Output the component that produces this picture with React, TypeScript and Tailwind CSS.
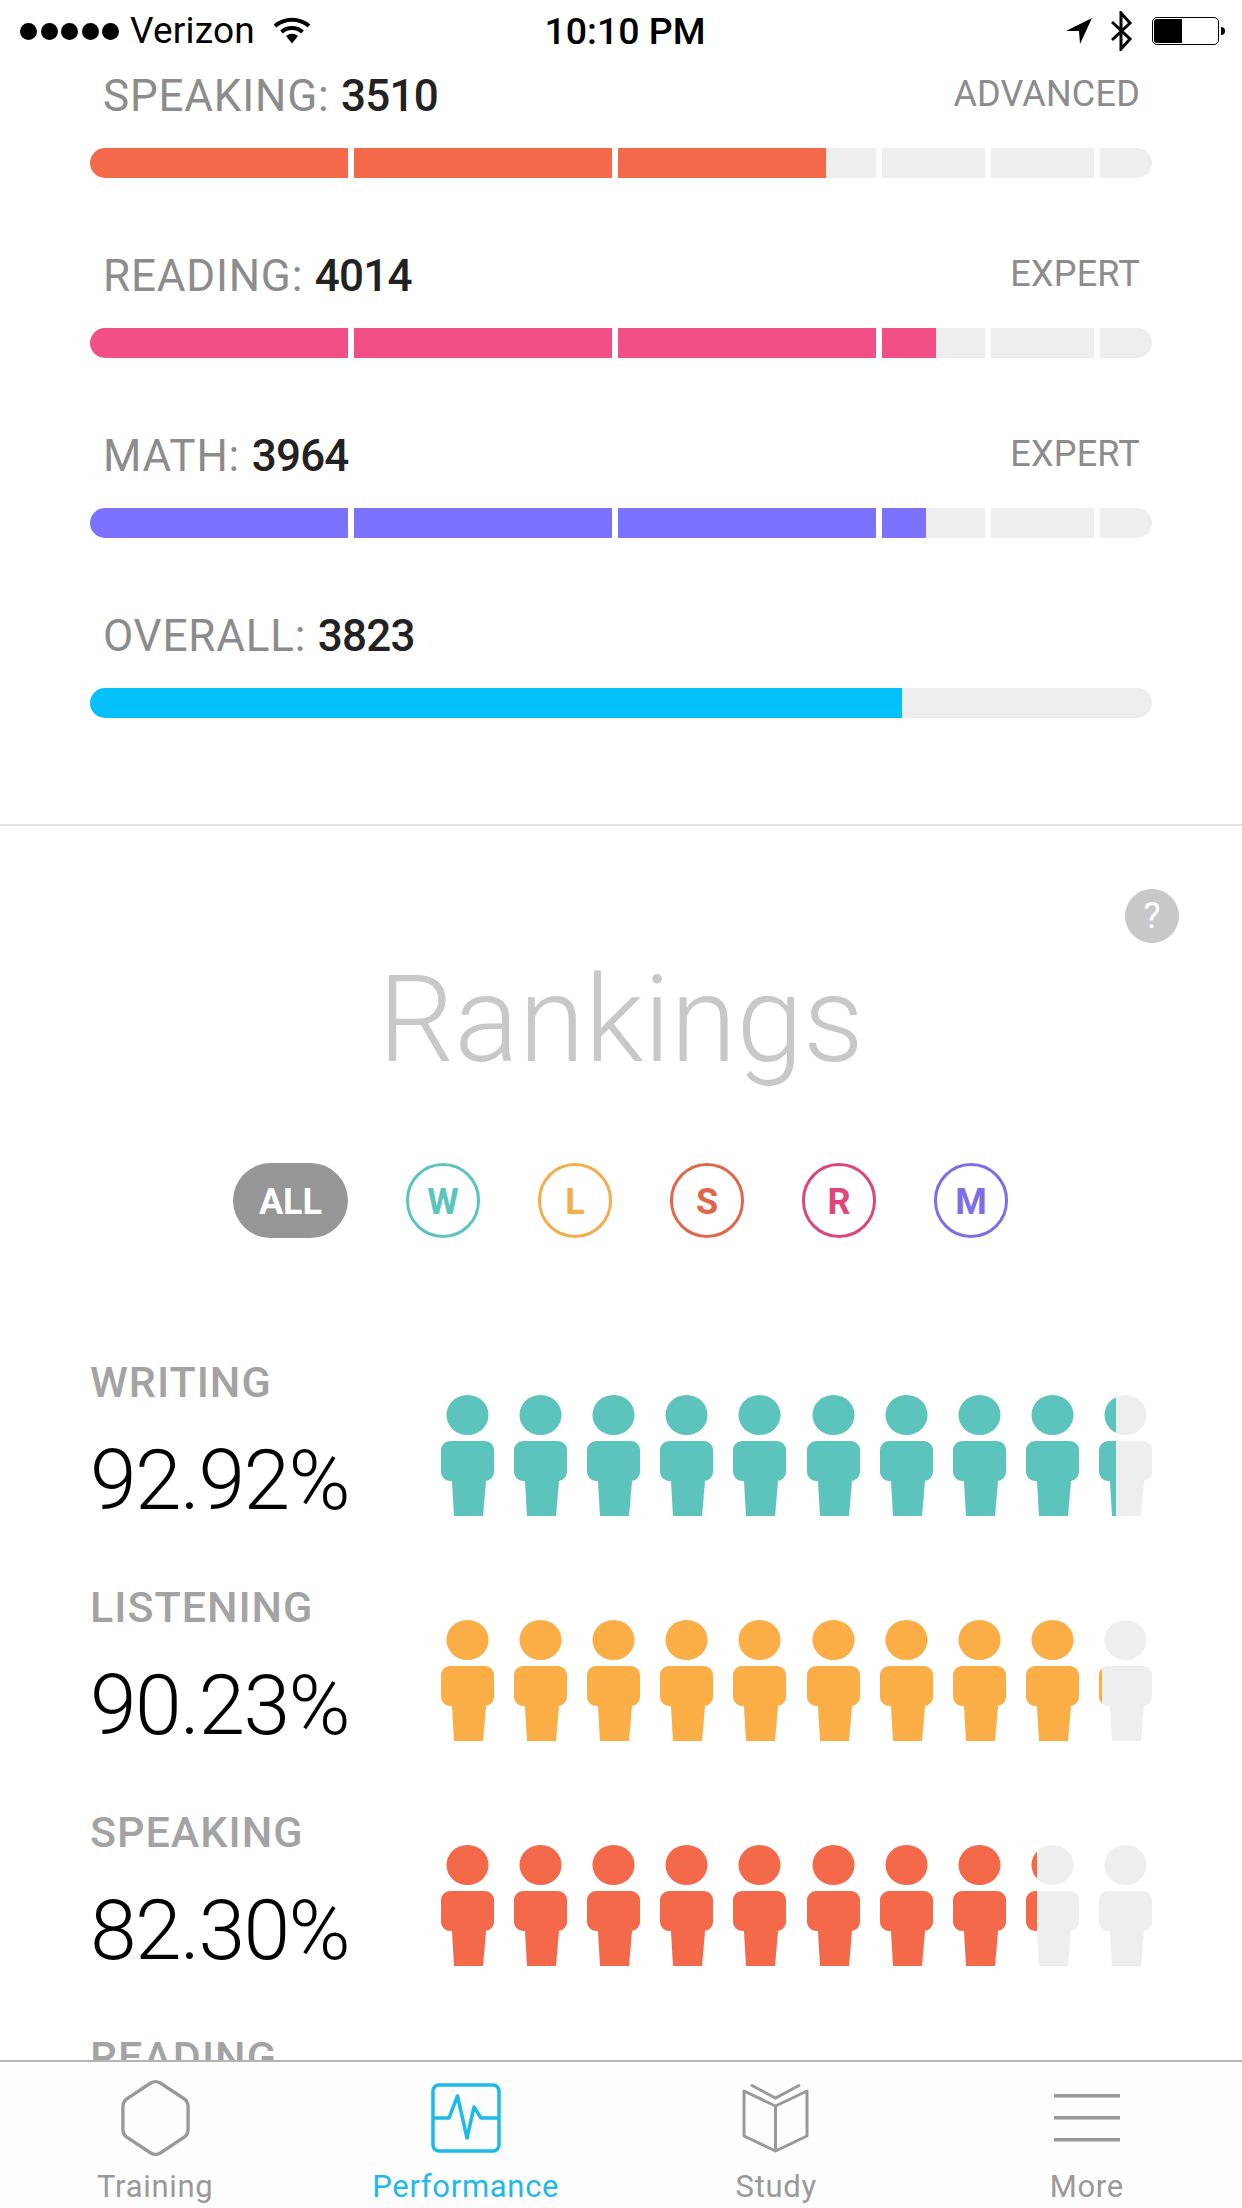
import { useId } from "react";

const TEAL = "#5cc4bd";
const ORANGE = "#fbae45";
const RED = "#f3694a";
const PINK = "#f14f85";
const PURPLE = "#7b72ff";
const BLUE = "#04c0fb";
const EMPTY = "#eeeeee";

// bar is split into level segments, widths in px
const SEGMENTS = [258, 258, 258, 103, 103, 52];

const SCORES = [
  { label: "SPEAKING:", score: "3510", level: "ADVANCED", color: RED, fill: 736 },
  { label: "READING:", score: "4014", level: "EXPERT", color: PINK, fill: 846 },
  { label: "MATH:", score: "3964", level: "EXPERT", color: PURPLE, fill: 836 },
];

const FILTERS = [
  { key: "W", cls: "border-[#5cc4bd] text-[#5cc4bd]" },
  { key: "L", cls: "border-[#f2ae4c] text-[#f2ae4c]" },
  { key: "S", cls: "border-[#e0674a] text-[#e0674a]" },
  { key: "R", cls: "border-[#dd4679] text-[#dd4679]" },
  { key: "M", cls: "border-[#7b6ee6] text-[#7b6ee6]" },
];

const RANKINGS = [
  { label: "WRITING", value: "92.92%", color: TEAL, filled: 657 + 17 },
  { label: "LISTENING", value: "90.23%", color: ORANGE, filled: 657 + 3 },
  { label: "SPEAKING", value: "82.30%", color: RED, filled: 584 + 11 },
  { label: "READING", value: "", color: PINK, filled: 0 },
];

function StatusBar() {
  return (
    <div className="grid h-[60px] shrink-0 grid-cols-[1fr_auto_1fr] items-center pt-[2px] font-['Roboto',sans-serif] text-black">
      <div className="flex items-center pl-[20px]">
        <div className="flex gap-[3.5px]">
          {[0, 1, 2, 3, 4].map((i) => (
            <span key={i} className="h-[17px] w-[17px] rounded-full bg-black" />
          ))}
        </div>
        <span className="ml-[11px] text-[37px] leading-[58px] tracking-[0.2px]">Verizon</span>
        <svg className="ml-[18px] -mt-[2px]" width="38" height="28" viewBox="0 0 38 28">
          <path d="M2 10 A26 26 0 0 1 36 10" fill="none" stroke="#000" strokeWidth="4" />
          <path d="M8.5 16 A16 16 0 0 1 29.5 16" fill="none" stroke="#000" strokeWidth="4" />
          <path d="M13 20 Q19 15.5 25 20 L19 27.5 Z" fill="#000" />
        </svg>
      </div>
      <span className="ml-[8px] text-[37.5px] font-medium leading-[58px]">10:10 PM</span>
      <div className="flex items-center justify-end pr-[17px]">
        <svg width="26" height="26" viewBox="0 0 26 26">
          <path d="M26 0 L0 13 L13 13 L14 26 Z" fill="#000" />
        </svg>
        <svg className="ml-[19px]" width="21" height="40" viewBox="0 0 21 40">
          <path d="M1 11 L19 28 L10 38 L10 2 L19 12 L1 29" fill="none" stroke="#000" strokeWidth="3" />
        </svg>
        <div className="ml-[20px] h-[28px] w-[67px] rounded-[5px] border border-black p-[1px]">
          <div className="h-full w-[28px] rounded-l-[3px] bg-black" />
        </div>
        <div className="ml-[2px] h-[8px] w-[4px] rounded-r-full bg-black" />
      </div>
    </div>
  );
}

function ScoreRow({ label, score, level, color, fill }: { label: string; score: string; level: string; color: string; fill: number }) {
  let start = 0;
  return (
    <div className="mb-[75px]">
      <div className="flex items-start justify-between pl-[13px] pr-[12px]">
        <p className="text-[44px] leading-[46px] tracking-[0.8px] text-[#8c8c8c]">
          {label} <span className="font-medium tracking-[-0.8px] text-[#222222]">{score}</span>
        </p>
        <span className="text-[36px] leading-[42px] tracking-[0.2px] text-[#8c8c8c]">{level}</span>
      </div>
      <div className="mt-[29px] flex h-[30px] gap-[6px] overflow-hidden rounded-full">
        {SEGMENTS.map((w, i) => {
          const filled = Math.max(0, Math.min(w, fill - start));
          start += w + 6;
          return (
            <div key={i} className="shrink-0 bg-[#eeeeee]" style={{ width: w }}>
              <div className="h-full" style={{ width: filled, background: color }} />
            </div>
          );
        })}
      </div>
    </div>
  );
}

function Person({ color, fill }: { color: string; fill: number }) {
  const id = useId();
  const shape = (
    <>
      <ellipse cx="26.5" cy="20" rx="21" ry="20" />
      <path d="M9 46 H44 A9 9 0 0 1 53 55 V77 A9 9 0 0 1 44 86 H45 L42 121 H13 L11 86 H9 A9 9 0 0 1 0 77 V55 A9 9 0 0 1 9 46 Z" />
    </>
  );
  return (
    <svg width="53" height="121" viewBox="0 0 53 121" className="shrink-0">
      <clipPath id={id}>
        <rect x="0" y="0" width={fill} height="121" />
      </clipPath>
      <g fill={EMPTY}>{shape}</g>
      <g fill={color} clipPath={`url(#${id})`}>
        {shape}
      </g>
    </svg>
  );
}

function RankingRow({ label, value, color, filled }: { label: string; value: string; color: string; filled: number }) {
  return (
    <div className="flex h-[225px] shrink-0">
      <div className="w-[351px] shrink-0">
        <p className="text-[43px] font-medium leading-[44px] tracking-[1px] text-[#a3a3a3]">{label}</p>
        <p className="mt-[35px] text-[84px] font-light leading-[84px] tracking-[-1.6px] text-black">{value}</p>
      </div>
      <div className="mt-[35px] flex w-[711px] justify-between">
        {Array.from({ length: 10 }).map((_, i) => (
          <Person key={i} color={color} fill={Math.max(0, Math.min(53, filled - i * 73))} />
        ))}
      </div>
    </div>
  );
}

function TabBar() {
  const tabs = [
    {
      label: "Training",
      active: false,
      icon: (
        <svg width="69" height="78" viewBox="0 0 72 80" fill="none" stroke="#999999" strokeWidth="3.5" strokeLinejoin="round">
          <path d="M31 3.5 Q36 0.5 41 3.5 L66 20 Q70 23 70 28 V52 Q70 57 66 60 L41 76.5 Q36 79.5 31 76.5 L6 60 Q2 57 2 52 V28 Q2 23 6 20 Z" />
        </svg>
      ),
    },
    {
      label: "Performance",
      active: true,
      icon: (
        <svg width="70" height="70" viewBox="0 0 70 70" fill="none" stroke="#1fb9e8" strokeWidth="3.5">
          <rect x="2" y="2" width="66" height="66" rx="6" />
          <path d="M3 35 H18 L26.5 13 L36 55 L43 24 L50 35 H67" strokeLinejoin="round" />
        </svg>
      ),
    },
    {
      label: "Study",
      active: false,
      icon: (
        <svg width="68" height="70" viewBox="0 0 68 70" fill="none" stroke="#999999" strokeWidth="3">
          <path d="M2 8 L33.5 23 L65 8 V53 L33.5 68 L2 53 Z M33.5 23 V68" strokeLinejoin="round" />
          <path d="M9 2 L33.5 15 L58 2" />
        </svg>
      ),
    },
    {
      label: "More",
      active: false,
      icon: (
        <svg width="66" height="48" viewBox="0 0 66 48" fill="#999999">
          <rect x="0" y="0" width="66" height="3.5" />
          <rect x="0" y="22" width="66" height="3.5" />
          <rect x="0" y="44" width="66" height="3.5" />
        </svg>
      ),
    },
  ];
  return (
    <nav className="grid h-[148px] shrink-0 grid-cols-4 border-t-2 border-[#b4b4b4] bg-[#fdfdfd]">
      {tabs.map((t) => (
        <div key={t.label} className="flex flex-col items-center">
          <div className="flex h-[107px] items-center justify-center pt-[5px]">{t.icon}</div>
          <span className={`text-[31px] leading-[36px] tracking-[0.7px] ${t.active ? "text-[#1fb9e8]" : "text-[#999999]"}`}>{t.label}</span>
        </div>
      ))}
    </nav>
  );
}

export default function App() {
  return (
    <div className="flex h-[2208px] w-[1242px] flex-col overflow-hidden bg-white font-['Roboto',sans-serif]">
      <StatusBar />
      <main className="min-h-0 flex-1 overflow-hidden">
        <section className="px-[90px] pb-[106px] pt-[13px]">
          {SCORES.map((s) => (
            <ScoreRow key={s.label} {...s} />
          ))}
          <div>
            <p className="pl-[13px] text-[44px] leading-[46px] tracking-[0.8px] text-[#8c8c8c]">
              OVERALL: <span className="font-medium tracking-[-0.8px] text-[#222222]">3823</span>
            </p>
            <div className="mt-[29px] h-[30px] overflow-hidden rounded-full bg-[#eeeeee]">
              <div className="h-full w-[812px]" style={{ background: BLUE }} />
            </div>
          </div>
        </section>

        <div className="h-[2px] bg-[#e2e2e2]" />

        <section>
          <div className="flex justify-end pr-[63px] pt-[63px]">
            <span className="flex h-[54px] w-[54px] items-center justify-center rounded-full bg-[#c8c8c8] text-[36px] text-white">?</span>
          </div>
          <h2 className="mt-[17px] text-center text-[120px] font-light leading-[120px] text-[#c8c8c8]">Rankings</h2>

          <div className="mt-[83px] flex justify-center gap-[58px] pr-[1px]">
            <span className="flex h-[75px] w-[115px] items-center justify-center rounded-full bg-[#969696] pt-[2px] text-[36px] font-bold text-white">ALL</span>
            {FILTERS.map((f) => (
              <span key={f.key} className={`flex h-[75px] w-[74px] items-center justify-center rounded-full border-[3px] pt-[2px] text-[36px] font-bold ${f.cls}`}>
                {f.key}
              </span>
            ))}
          </div>

          <div className="mt-[122px] px-[90px]">
            {RANKINGS.map((r) => (
              <RankingRow key={r.label} {...r} />
            ))}
          </div>
        </section>
      </main>
      <TabBar />
    </div>
  );
}
